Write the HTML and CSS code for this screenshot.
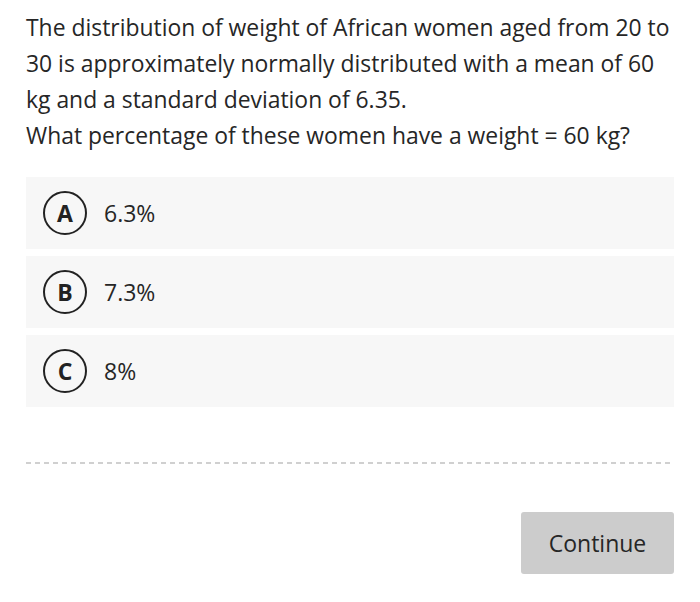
FILE: index.html
```html
<!DOCTYPE html>
<html>
<head>
<meta charset="utf-8">
<link rel="stylesheet" href="styles.css">
</head>
<body>
<div class="page">
  <p class="question">The distribution of weight of African women aged from 20 to 30 is approximately normally distributed with a mean of 60 kg and a standard deviation of 6.35.<br>What percentage of these women have a weight = 60 kg?</p>
  <div class="options">
    <div class="option"><span class="letter">A</span><span class="answer">6.3%</span></div>
    <div class="option"><span class="letter">B</span><span class="answer">7.3%</span></div>
    <div class="option"><span class="letter">C</span><span class="answer">8%</span></div>
  </div>
  <div class="divider"></div>
  <div class="actions"><button class="continue">Continue</button></div>
</div>
</body>
</html>
```
FILE: styles.css
```css
html, body {
  margin: 0;
  padding: 0;
  background: #fff;
}
.page {
  width: 648px;
  margin-left: 26px;
  padding-top: 10px;
  font-family: "Open Sans", "Liberation Sans", sans-serif;
  color: #262626;
}
.question {
  margin: 0;
  font-size: 22.9px;
  line-height: 36px;
}
.options {
  margin-top: 23px;
  display: flex;
  flex-direction: column;
  gap: 7px;
}
.option {
  height: 72px;
  background: #f7f7f7;
  display: flex;
  align-items: center;
  padding-left: 17px;
  gap: 17px;
}
.letter {
  box-sizing: border-box;
  width: 44px;
  height: 44px;
  border: 2.8px solid #222;
  border-radius: 50%;
  display: flex;
  align-items: center;
  justify-content: center;
  font-size: 23px;
  font-weight: 700;
  color: #222;
}
.answer {
  font-size: 23px;
}
.divider {
  margin-top: 55px;
  height: 2px;
  background: repeating-linear-gradient(to right, #d0d0d0 0 5px, transparent 5px 9px);
}
.actions {
  display: flex;
  justify-content: flex-end;
  margin-top: 48px;
}
.continue {
  width: 153px;
  height: 62px;
  background: #cccccc;
  border: none;
  border-radius: 3px;
  font-family: "Open Sans", "Liberation Sans", sans-serif;
  font-size: 23px;
  color: #262626;
  padding: 0;
}
```
